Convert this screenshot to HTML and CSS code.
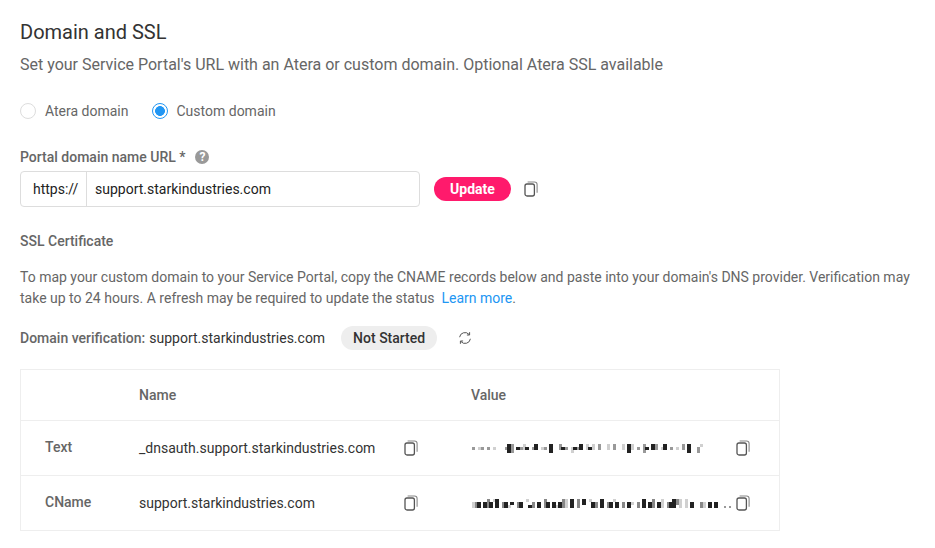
FILE: index.html
```html
<!DOCTYPE html>
<html lang="en">
<head>
<meta charset="utf-8">
<title>Domain and SSL</title>
<link rel="stylesheet" href="styles.css">
</head>
<body>
<svg class="defs" width="0" height="0" aria-hidden="true">
  <symbol id="copy" viewBox="0 0 14 16">
    <rect x="1" y="3" width="9.4" height="12" rx="2" fill="none" stroke="#555" stroke-width="1.3"/>
    <path d="M3.6 1h6.9a2.6 2.6 0 0 1 2.6 2.6v8.2" fill="none" stroke="#888" stroke-width="1.1"/>
  </symbol>
</svg>
<main class="page">
  <h1 class="title">Domain and SSL</h1>
  <p class="subtitle">Set your Service Portal's URL with an Atera or custom domain. Optional Atera SSL available</p>
  <div class="radios">
    <label class="radio"><span class="dot"></span>Atera domain</label>
    <label class="radio"><span class="dot on"></span>Custom domain</label>
  </div>
  <div class="label-row"><span class="label">Portal domain name URL *</span><span class="help">?</span></div>
  <div class="url-row">
    <div class="url-field"><span class="scheme">https://</span><span class="host">support.starkindustries.com</span></div>
    <button class="update">Update</button>
    <svg class="icon copy-main"><use href="#copy"/></svg>
  </div>
  <h2 class="label ssl">SSL Certificate</h2>
  <p class="desc">To map your custom domain to your Service Portal, copy the CNAME records below and paste into your domain's DNS provider. Verification may take up to 24 hours. A refresh may be required to update the status &nbsp;<a href="#">Learn more</a>.</p>
  <div class="verify">
    <span class="label">Domain verification:</span><span class="vhost">support.starkindustries.com</span>
    <span class="pill">Not Started</span>
    <svg class="refresh" viewBox="0 0 14 14"><path d="M1.6 6.2A5.4 5.4 0 0 1 11 3.4M12.4 7.8A5.4 5.4 0 0 1 3 10.6" fill="none" stroke="#555" stroke-width="1"/><path d="M11.6 1.2v2.8H8.9M2.4 12.8V10h2.7" fill="none" stroke="#555" stroke-width="1"/></svg>
  </div>
  <div class="table">
    <div class="row head"><span class="c1"></span><span class="c2 th">Name</span><span class="c3"></span><span class="c4 th">Value</span></div>
    <div class="row"><span class="c1 th">Text</span><span class="c2">_dnsauth.support.starkindustries.com</span><span class="c3"><svg class="icon"><use href="#copy"/></svg></span>
      <span class="c4 val">
        <svg class="mosaic" viewBox="0 0 264 15" shape-rendering="crispEdges" fill="none" stroke-width="3" aria-hidden="true">
          <path stroke="#d0d0d0" d="M7.5 6V9M22.5 6V9M52.5 3V9M70.5 6V9M100.5 6V12M115.5 3V9M121.5 3V9M136.5 3V9M151.5 3V9M160.5 3V9M190.5 6V9M205.5 6V9M229.5 3V6"/>
          <path stroke="#999" d="M1.5 6V9M10.5 6V9M16.5 6V9M34.5 6V9M40.5 3V12M49.5 6V9M61.5 6V9M73.5 6V9M88.5 3V9M94.5 6V9M106.5 6V9M127.5 3V9M142.5 3V9M166.5 6V9M172.5 3V12M184.5 3V9M199.5 6V9M211.5 3V9M226.5 6V12"/>
          <path class="ink" d="M37.5 3V12M46.5 6V9M55.5 6V9M64.5 3V9M79.5 3V12M91.5 6V9M103.5 6V9M109.5 3V9M118.5 6V9M157.5 3V12M175.5 6V9M181.5 3V9M193.5 3V9M217.5 3V12"/>
        </svg>
        <svg class="icon"><use href="#copy"/></svg>
      </span></div>
    <div class="row"><span class="c1 th">CName</span><span class="c2">support.starkindustries.com</span><span class="c3"><svg class="icon"><use href="#copy"/></svg></span>
      <span class="c4 val">
        <svg class="mosaic" viewBox="0 0 264 15" shape-rendering="crispEdges" fill="none" stroke-width="3" aria-hidden="true">
          <path stroke="#d0d0d0" d="M1.5 6V12M22.5 3V6M37.5 9V12M55.5 3V6M85.5 9V12M94.5 3V12M118.5 3V6M142.5 3V6M160.5 6V9M190.5 3V12M208.5 3V12M214.5 3V12M232.5 6V12"/>
          <path stroke="#888" d="M4.5 6V12M16.5 3V12M31.5 6V12M46.5 6V12M61.5 6V12M73.5 3V12M91.5 3V12M106.5 3V12M124.5 6V12M136.5 6V12M151.5 6V12M166.5 6V12M181.5 3V12M196.5 6V12M205.5 3V9M229.5 6V12"/>
          <path stroke="#999" stroke-width="2" d="M253 10V12M258 10V12"/>
          <path class="ink" d="M7.5 6V12M13.5 6V12M19.5 6V12M25.5 3V12M34.5 6V12M40.5 6V9M49.5 6V12M58.5 9V12M67.5 6V12M76.5 6V12M82.5 6V12M88.5 6V12M100.5 3V12M112.5 3V9M121.5 6V12M130.5 3V12M139.5 6V12M145.5 6V12M157.5 6V12M172.5 3V12M178.5 6V12M187.5 6V12M199.5 6V12M202.5 3V12M220.5 6V12M238.5 6V12M244.5 6V12"/>
        </svg>
        <svg class="icon"><use href="#copy"/></svg>
      </span></div>
  </div>
</main>
</body>
</html>
```
FILE: styles.css
```css
* { box-sizing: border-box; }
html, body { margin: 0; padding: 0; background: #fff; }
body { font-family: Roboto, "Liberation Sans", sans-serif; color: #222; width: 935px; height: 548px; overflow: hidden; }
.defs { position: absolute; }
.page { padding: 20px 0 0 20px; }
.title { margin: 0; font-size: 20px; line-height: 24px; font-weight: 400; color: #333; }
.subtitle { margin: 11px 0 0; font-size: 16px; line-height: 20px; color: #666; }
.radios { display: flex; gap: 23px; margin-top: 26px; height: 20px; }
.radio { display: flex; align-items: center; gap: 9px; font-size: 14px; color: #666; }
.dot { width: 16px; height: 16px; border-radius: 50%; border: 1px solid #ddd; background: #fff; }
.dot.on { border-color: #2196f3; background: radial-gradient(circle, #2196f3 0 4.6px, #fff 5.2px); }
.label { font-size: 14px; font-weight: 500; color: #666; margin: 0; }
.label-row { display: flex; align-items: center; gap: 10px; margin-top: 26px; height: 20px; font-size: 13px; }
.help { width: 14px; height: 14px; border-radius: 50%; background: #999; color: #fff; font-size: 12px; font-weight: 700; display: flex; align-items: center; justify-content: center; }
.url-row { display: flex; align-items: center; margin-top: 4px; }
.url-field { width: 400px; height: 36px; display: flex; align-items: center; border: 1px solid #ddd; border-radius: 4px; font-size: 14px; color: #222; }
.scheme { width: 66px; height: 100%; display: flex; align-items: center; padding-left: 12px; border-right: 1px solid #ddd; }
.host { padding-left: 8px; }
.update { margin-left: 14px; width: 77px; height: 24px; border: 0; border-radius: 12px; background: #ff1a6c; color: #fff; font: 700 14px Roboto, sans-serif; padding: 0; }
.icon { width: 14px; height: 16px; display: block; }
.copy-main { margin-left: 13px; }
.ssl { margin-top: 24px; line-height: 20px; }
.desc { margin: 16px 0 0; width: 900px; font-size: 14px; line-height: 21px; color: #666; }
.desc a { color: #2196f3; text-decoration: none; }
.verify { display: flex; align-items: center; margin-top: 17px; height: 24px; font-size: 14px; }
.vhost { margin-left: 4px; color: #333; }
.pill { margin-left: 16px; width: 96px; height: 24px; border-radius: 12px; background: #eee; color: #333; font-weight: 500; display: flex; align-items: center; justify-content: center; }
.refresh { width: 14px; height: 14px; margin-left: 21px; }
.table { margin-top: 19px; width: 760px; border: 1px solid #eee; font-size: 14px; }
.row { display: flex; align-items: center; height: 55px; border-top: 1px solid #eee; color: #333; }
.row.head { height: 50px; border-top: 0; }
.c1 { width: 118px; padding-left: 24px; padding-bottom: 2px; }
.c2 { width: 265px; }
.c3 { width: 67px; }
.c4 { flex: 1; }
.th { font-weight: 500; color: #666; }
.val { display: flex; align-items: center; }
.mosaic { display: block; width: 265px; height: 15px; flex: none; }
.ink { stroke: #222; stroke-width: 4; }
```
